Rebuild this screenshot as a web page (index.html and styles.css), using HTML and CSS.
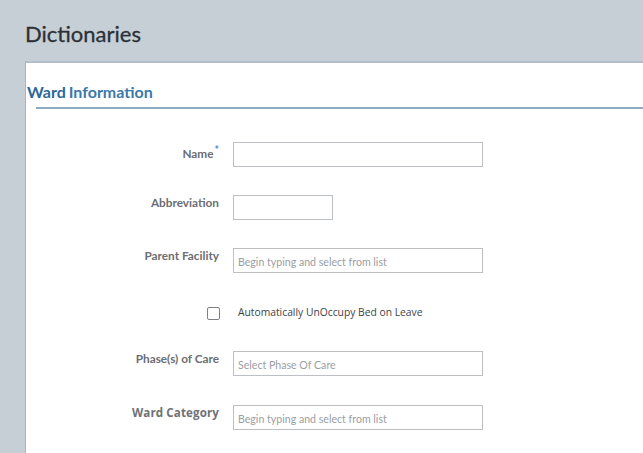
FILE: index.html
```html
<!DOCTYPE html>
<html>
<head>
<meta charset="utf-8">
<link rel="stylesheet" href="styles.css">
</head>
<body>
<div class="page">
  <h1 class="title">Dictionaries</h1>
  <div class="panel">
    <div class="section-title"><span class="w1">Ward</span> <span class="w2">Information</span></div>
    <div class="rule"></div>
    <div class="form">
      <div class="row r-name">
        <label class="lbl">Name<span class="req">*</span></label>
        <div class="input wide"></div>
      </div>
      <div class="row r-abbr">
        <label class="lbl">Abbreviation</label>
        <div class="input short"></div>
      </div>
      <div class="row r-parent">
        <label class="lbl">Parent Facility</label>
        <div class="input wide"><span class="ph">Begin typing and select from list</span></div>
      </div>
      <div class="row r-check">
        <div class="lbl"><span class="checkbox"></span></div>
        <div class="check-text">Automatically UnOccupy Bed on Leave</div>
      </div>
      <div class="row r-phase">
        <label class="lbl">Phase(s) of Care</label>
        <div class="input wide"><span class="ph">Select Phase Of Care</span></div>
      </div>
      <div class="row r-cat">
        <label class="lbl alt">Ward Category</label>
        <div class="input wide"><span class="ph">Begin typing and select from list</span></div>
      </div>
    </div>
  </div>
</div>
</body>
</html>
```
FILE: styles.css
```css
html, body {
  margin: 0;
  padding: 0;
  height: 100%;
}
body {
  background: #c6ced6;
  font-family: Lato, "Open Sans", sans-serif;
  overflow: hidden;
}
.page {
  padding-left: 25px;
}
.title {
  margin: 0;
  padding-top: 21px;
  height: 40px;
  font-size: 22px;
  font-weight: 400;
  color: #2b3136;
  line-height: 26px;
  -webkit-text-stroke: 0.3px #2b3136;
}
.panel {
  background: #ffffff;
  border-top: 2px solid #b3bec8;
  border-left: 1px solid #aab5bf;
  height: calc(100vh - 63px);
  overflow: hidden;
}
.section-title {
  padding-top: 19px;
  padding-left: 1px;
  font-size: 16px;
  font-weight: 700;
  line-height: 20px;
  height: 25px;
}
.w1 { color: #2c6797; }
.w2 { color: #3b79aa; margin-left: -1px; }
.rule {
  margin-left: 10px;
  height: 2px;
  background: #8eabc3;
}
.form {
  padding-top: 33px;
}
.row {
  display: flex;
  align-items: flex-start;
  height: 25px;
  margin-bottom: 28px;
}
.lbl {
  width: 193px;
  margin-right: 14px;
  text-align: right;
  font-size: 11.8px;
  font-weight: 700;
  color: #6b6e72;
  line-height: 14px;
  padding-top: 1px;
  flex: none;
}
.lbl.alt {
  font-family: "Open Sans", sans-serif;
  font-size: 11.6px;
  letter-spacing: 0.1px;
  color: #6f7276;
}
.req {
  color: #3a8fd6;
  font-size: 10.5px;
  vertical-align: 4px;
  margin-left: 1px;
}
.input {
  box-sizing: border-box;
  height: 25px;
  border: 1px solid #bcc0c5;
  background: #fff;
  display: flex;
  align-items: center;
  padding-left: 4px;
  flex: none;
}
.input.wide { width: 250px; }
.input.short { width: 100px; }
.ph {
  font-size: 10.6px;
  color: #9a9ea2;
  padding-top: 2px;
}
.r-check {
  margin-top: 0;
  margin-bottom: 25px;
  align-items: center;
}
.r-check .lbl {
  width: 194px;
  margin-right: 18px;
  padding-top: 0;
  height: 14px;
  display: flex;
  justify-content: flex-end;
  align-items: center;
}
.checkbox {
  display: block;
  box-sizing: border-box;
  width: 13px;
  height: 13px;
  border: 1px solid #7d8185;
  border-radius: 2px;
  background: #fff;
}
.check-text {
  font-family: "Open Sans", sans-serif;
  font-size: 10.3px;
  color: #3e4246;
  margin-top: -3px;
}
.r-phase {
  margin-bottom: 29px;
}
```
